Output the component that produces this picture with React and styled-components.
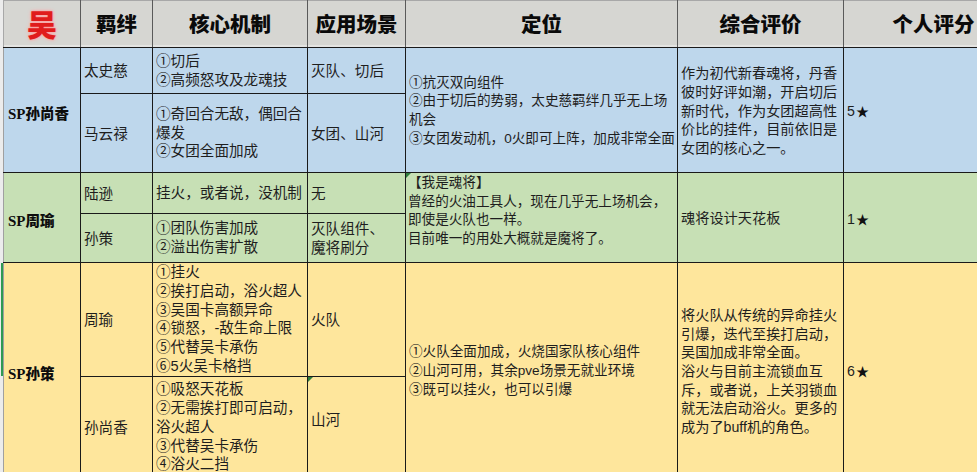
import styled, { createGlobalStyle, css } from 'styled-components';

const GlobalStyle = createGlobalStyle`
  html, body {
    margin: 0;
    padding: 0;
    background: #ececec;
  }
  body {
    font-family: "Liberation Sans", "Noto Sans CJK SC", sans-serif;
  }
`;

const tones = {
  blue: '#bed7ec',
  green: '#c7e0b5',
  yellow: '#fee69c',
};

const groups = [
  {
    hero: '孙尚香',
    tone: 'blue',
    members: [
      { name: '太史慈', height: 46, mech: ['①切后', '②高频怒攻及龙魂技'], scene: ['灭队、切后'] },
      { name: '马云禄', height: 79, mech: ['①奇回合无敌，偶回合', '爆发', '②女团全面加成'], scene: ['女团、山河'] },
    ],
    role: ['①抗灭双向组件', '②由于切后的势弱，太史慈羁绊几乎无上场', '机会', '③女团发动机，0火即可上阵，加成非常全面'],
    review: ['作为初代新春魂将，丹香', '彼时好评如潮，开启切后', '新时代，作为女团超高性', '价比的挂件，目前依旧是', '女团的核心之一。'],
    score: 5,
  },
  {
    hero: '周瑜',
    tone: 'green',
    roleTop: true,
    members: [
      { name: '陆逊', height: 41, mech: ['挂火，或者说，没机制'], scene: ['无'] },
      { name: '孙策', height: 49, mech: ['①团队伤害加成', '②溢出伤害扩散'], scene: ['灭队组件、', '魔将刷分'] },
    ],
    role: ['【我是魂将】', '曾经的火油工具人，现在几乎无上场机会，', '即使是火队也一样。', '目前唯一的用处大概就是魔将了。'],
    review: ['魂将设计天花板'],
    score: 1,
  },
  {
    hero: '孙策',
    tone: 'yellow',
    selected: true,
    members: [
      {
        name: '周瑜',
        height: 112,
        mech: ['①挂火', '②挨打启动，浴火超人', '③吴国卡高额异命', '④锁怒，-敌生命上限', '⑤代替吴卡承伤', '⑥5火吴卡格挡'],
        scene: ['火队'],
      },
      {
        name: '孙尚香',
        height: 102,
        mech: ['①吸怒天花板', '②无需挨打即可启动，', '浴火超人', '③代替吴卡承伤', '④浴火二挡'],
        scene: ['山河'],
        sceneFlag: true,
        sceneShift: true,
      },
    ],
    role: ['①火队全面加成，火烧国家队核心组件', '②山河可用，其余pve场景无就业环境', '③既可以挂火，也可以引爆'],
    review: ['将火队从传统的异命挂火', '引爆，迭代至挨打启动，', '吴国加成非常全面。', '浴火与目前主流锁血互', '斥，或者说，上关羽锁血', '就无法启动浴火。更多的', '成为了buff机的角色。'],
    score: 6,
  },
];

const App = () => {
  return (
    <Page>
      <GlobalStyle />
      <Sheet>
        <colgroup>
          <col style={{ width: 77 }} />
          <col style={{ width: 72 }} />
          <col style={{ width: 155 }} />
          <col style={{ width: 98 }} />
          <col style={{ width: 272 }} />
          <col style={{ width: 166 }} />
          <col style={{ width: 180 }} />
        </colgroup>
        <thead>
          <HeadRow>
            <Head $first>
              <Wu>吴</Wu>
            </Head>
            <Head>羁绊</Head>
            <Head>核心机制</Head>
            <Head>应用场景</Head>
            <Head>定位</Head>
            <Head>综合评价</Head>
            <Head>个人评分</Head>
          </HeadRow>
        </thead>
        <tbody>
          {groups.map((g) =>
            g.members.map((m, i) => (
              <tr key={g.hero + m.name} style={{ height: m.height }}>
                {i === 0 && (
                  <GroupCell rowSpan={g.members.length} $tone={g.tone}>
                    {g.selected && <SelectMark />}
                    <Sp>SP</Sp>
                    <HeroName>{g.hero}</HeroName>
                  </GroupCell>
                )}
                <Cell $tone={g.tone} $fs={14.6}>{m.name}</Cell>
                <Cell $tone={g.tone} $fs={14.6} $lh={18.8} $flush>
                  {m.mech.join('\n')}
                </Cell>
                <Cell $tone={g.tone} $fs={14.6} $flag={m.sceneFlag} $lift={m.sceneShift}>
                  {m.scene.join('\n')}
                </Cell>
                {i === 0 && (
                  <>
                    <Cell
                      rowSpan={g.members.length}
                      $tone={g.tone}
                      $fs={13.6}
                      $lh={18.7}
                      $top={g.roleTop}
                      $flag={g.roleTop}
                    >
                      {g.role.join('\n')}
                    </Cell>
                    <Cell rowSpan={g.members.length} $tone={g.tone} $fs={14.2} $lh={18.7}>
                      {g.review.join('\n')}
                    </Cell>
                    <Cell rowSpan={g.members.length} $tone={g.tone} $fs={14.2}>
                      {g.score}
                      <Star>★</Star>
                    </Cell>
                  </>
                )}
              </tr>
            ))
          )}
        </tbody>
      </Sheet>
    </Page>
  );
};

const Page = styled.div`
  width: 977px;
  height: 472px;
  overflow: hidden;
  padding-left: 3px;
  box-sizing: border-box;
  background: #ececec;
`;

const Sheet = styled.table`
  table-layout: fixed;
  border-collapse: collapse;
  width: 1020px;
  color: #1c1c1c;
`;

const HeadRow = styled.tr`
  height: 46px;
`;

const Head = styled.th`
  background: #d6d6d2;
  border: 1px solid #5a5a5a;
  border-top-color: #a8a8a8;
  border-bottom: 1px solid #1a1a1a;
  box-shadow: inset 0 -2px 0 #e4e4e2;
  font-family: "Noto Sans CJK SC", sans-serif;
  font-weight: 900;
  font-size: 20.5px;
  color: #0a0a0a;
  text-align: center;
  padding: 0 0 2px;
  white-space: nowrap;
  overflow: hidden;
  ${(p) =>
    p.$first &&
    css`
      border-left-color: #a8a8a8;
    `}
`;

const Wu = styled.span`
  font-size: 30px;
  font-weight: 900;
  color: #e01c1c;
  text-shadow: 0 0 2px #ff8a8a, 0 0 4px #ffb0b0;
`;

const GroupCell = styled.td`
  position: relative;
  background: ${(p) => tones[p.$tone]};
  border: 1px solid #1a1a1a;
  border-left-color: #a0a0a0;
  padding: 4px 2px 0 4px;
  vertical-align: middle;
  text-align: left;
  white-space: nowrap;
  font-size: 14.5px;
  font-weight: 900;
  color: #0d0d0d;
`;

const SelectMark = styled.span`
  position: absolute;
  left: -3px;
  top: 0;
  width: 2px;
  height: 113px;
  background: #2f9a52;
`;

const Sp = styled.span`
  font-family: "Liberation Serif", serif;
  font-weight: 700;
  font-size: 15px;
`;

const HeroName = styled.span`
  font-family: "Noto Sans CJK SC", sans-serif;
  font-weight: 900;
`;

const cellPadding = (p) => {
  if (p.$top) return '1px 2px 0';
  if (p.$lift) return '0 3px 14px';
  if (p.$flush) return '0 3px';
  return '2px 3px 0';
};

const Cell = styled.td`
  position: relative;
  background: ${(p) => tones[p.$tone]};
  border: 1px solid #1a1a1a;
  padding: ${cellPadding};
  vertical-align: ${(p) => (p.$top ? 'top' : 'middle')};
  text-align: left;
  font-size: ${(p) => p.$fs}px;
  line-height: ${(p) => p.$lh || 19}px;
  white-space: pre;
  overflow: hidden;
  color: #1e1e1e;
  ${(p) =>
    p.$flag &&
    css`
      &::before {
        content: '';
        position: absolute;
        left: 0;
        top: 0;
        border-top: 5px solid #2f7d3c;
        border-right: 5px solid transparent;
      }
    `}
`;

const Star = styled.span`
  font-family: "Noto Sans CJK SC", sans-serif;
  font-size: 13px;
  margin-left: 1px;
  color: #111;
`;

export default App;
